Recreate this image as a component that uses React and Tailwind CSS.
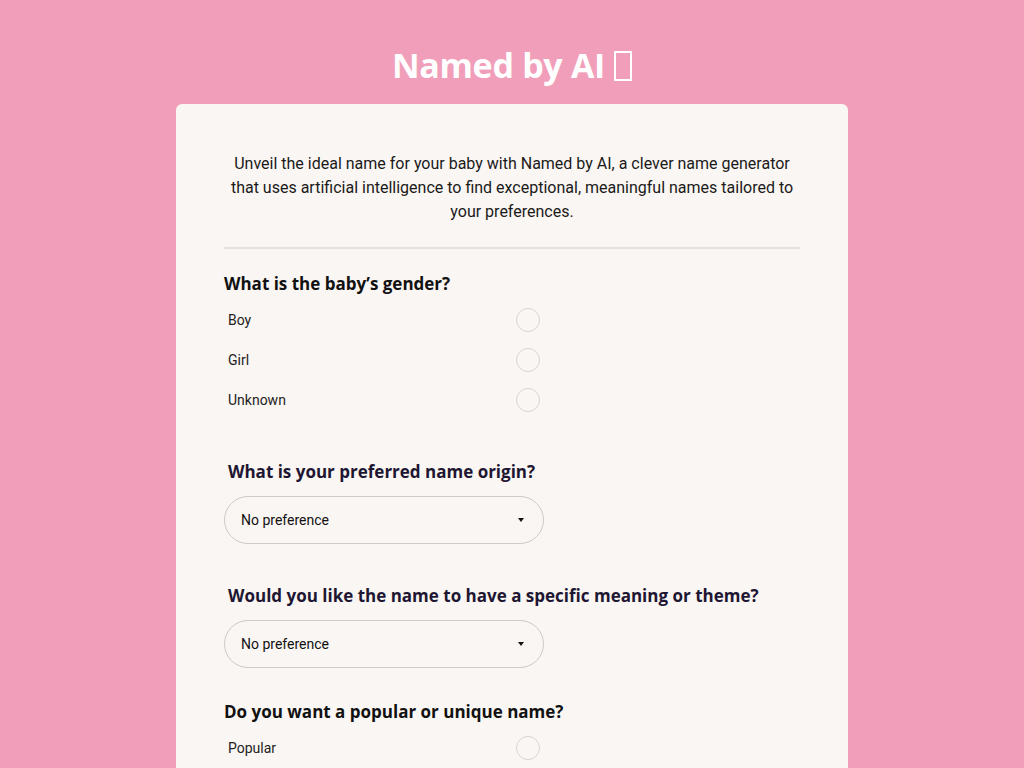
import React from "react";

const heading = { fontFamily: '"Open Sans", "Noto Sans", sans-serif' };

function Radio({ label }) {
  return (
    <label className="flex items-center h-10 pl-1 w-[316px] justify-between cursor-pointer">
      <span className="text-[14px] text-[#222]">{label}</span>
      <span className="w-6 h-6 rounded-full border border-[#d9d4d0] bg-[#faf6f3]"></span>
    </label>
  );
}

function Select() {
  return (
    <div className="w-[320px] h-12 rounded-full border border-[#cfcac6] flex items-center justify-between pl-4 pr-[19px]">
      <span className="text-[14px] text-[#111]">No preference</span>
      <svg width="6" height="4" viewBox="0 0 6 4"><path d="M0 0h6L3 4z" fill="#111" /></svg>
    </div>
  );
}

export default function App() {
  return (
    <div className="min-h-screen bg-[#f09eb9] flex flex-col items-center" style={{ fontFamily: 'Roboto, "Liberation Sans", sans-serif' }}>
      <h1 className="text-white font-bold text-[34px] leading-[40px] mt-[45px] mb-[19px] tracking-[-0.3px] flex items-center" style={heading}>
        <span>Named by AI</span>
        <span className="ml-[9px] inline-block w-[18px] h-[30px] border-2 border-white mt-[2px]" aria-label="👶"></span>
      </h1>
      <div className="w-[672px] bg-[#faf6f3] rounded-md px-12 pt-[48px] pb-10">
        <p className="text-[16px] leading-[24px] text-[#1a1a1a] text-center">
          Unveil the ideal name for your baby with Named by AI, a clever name generator that uses artificial intelligence to find exceptional, meaningful names tailored to your preferences.
        </p>
        <div className="h-[2px] bg-[#e6e1de] mt-[23px] mb-[23px]"></div>
        <h2 className="text-[17px] leading-[24px] font-bold text-[#111] mb-1" style={heading}>What is the baby’s gender?</h2>
        <Radio label="Boy" />
        <Radio label="Girl" />
        <Radio label="Unknown" />
        <h2 className="text-[17px] leading-[24px] font-bold text-[#1e1632] pl-1 mt-[40px] mb-3" style={heading}>What is your preferred name origin?</h2>
        <Select />
        <h2 className="text-[17px] leading-[24px] font-bold text-[#1e1632] pl-1 mt-10 mb-3" style={heading}>Would you like the name to have a specific meaning or theme?</h2>
        <Select />
        <h2 className="text-[17px] leading-[24px] font-bold text-[#111] mt-8 mb-1" style={heading}>Do you want a popular or unique name?</h2>
        <Radio label="Popular" />
        <Radio label="Unique" />
      </div>
    </div>
  );
}
